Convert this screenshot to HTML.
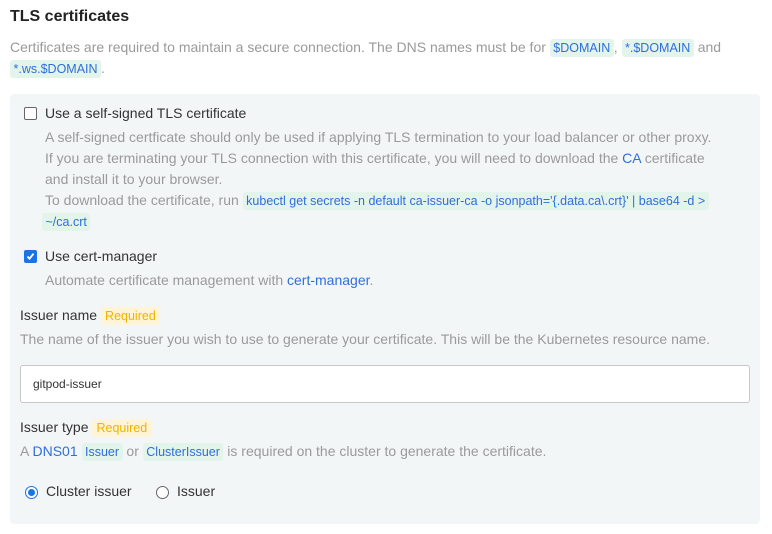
<!DOCTYPE html>
<html><head><meta charset="utf-8"><style>
*{margin:0;padding:0;box-sizing:border-box}
body{width:772px;height:534px;background:#fff;font-family:"Liberation Sans",sans-serif;font-size:14px;color:#333;position:relative;overflow:hidden}
.a{position:absolute;white-space:nowrap;line-height:20px}
.g{color:#9a9a9a}
.b{color:#2f6fdb}
code{font-family:"Liberation Sans",sans-serif;font-size:12.5px;color:#2f6fdb;background:#e3f4ea;border-radius:3px;padding:2px 3.5px}
.req{font-size:12.5px;color:#f0b400;background:#fff4d6;border-radius:3px;padding:2px 4px;margin-left:4px}
.panel{position:absolute;left:10px;top:94px;width:750px;height:430px;background:#f3f6f7;border-radius:4px}
.cb{position:absolute;width:13px;height:13px;border:1px solid #666;border-radius:2px;background:#fff}
.cbon{background:#1a73e8;border-color:#1a73e8}
.rad{position:absolute;width:13px;height:13px;border-radius:50%;border:1px solid #666;background:#fff}
.radon{border:1px solid #1a73e8}
.radon::after{content:"";position:absolute;left:2px;top:2px;width:7px;height:7px;border-radius:50%;background:#1a73e8}
input{position:absolute;left:20px;top:365px;width:730px;height:38px;border:1px solid #c8c8c8;border-radius:3px;background:#fff;font-family:"Liberation Sans",sans-serif;font-size:12px;padding-left:12px;color:#333}
</style></head><body>
<div class="a" style="left:10px;top:7px;font-size:16px;font-weight:bold;color:#222">TLS certificates</div>
<div class="a g" style="left:10px;top:37px">Certificates are required to maintain a secure connection. The DNS names must be for <code>$DOMAIN</code>, <code>*.$DOMAIN</code> and</div>
<div class="a g" style="left:10px;top:58px"><code>*.ws.$DOMAIN</code>.</div>
<div class="panel"></div>
<div class="cb" style="left:24px;top:107px"></div>
<div class="a" style="left:45px;top:103px">Use a self-signed TLS certificate</div>
<div class="a g" style="left:45px;top:127px">A self-signed certficate should only be used if applying TLS termination to your load balancer or other proxy.</div>
<div class="a g" style="left:45px;top:148px">If you are terminating your TLS connection with this certificate, you will need to download the <span class="b">CA</span> certificate</div>
<div class="a g" style="left:45px;top:169px">and install it to your browser.</div>
<div class="a g" style="left:45px;top:190px">To download the certificate, run <code>kubectl get secrets -n default ca-issuer-ca -o jsonpath='{.data.ca\.crt}' | base64 -d &gt;</code></div>
<div class="a g" style="left:45px;top:211px"><code style="margin-left:-3px">~/ca.crt</code></div>
<div class="cb cbon" style="left:24px;top:250px"><svg width="11" height="11" viewBox="0 0 11 11" style="position:absolute;left:0;top:0"><path d="M2.5 5.5l2 2.2 4-5" stroke="#fff" stroke-width="1.8" fill="none"/></svg></div>
<div class="a" style="left:45px;top:246px">Use cert-manager</div>
<div class="a g" style="left:45px;top:270px">Automate certificate management with <span class="b">cert-manager</span>.</div>
<div class="a" style="left:20px;top:305px">Issuer name<span class="req">Required</span></div>
<div class="a g" style="left:20px;top:329px">The name of the issuer you wish to use to generate your certificate. This will be the Kubernetes resource name.</div>
<input value="gitpod-issuer">
<div class="a" style="left:20px;top:417px">Issuer type<span class="req">Required</span></div>
<div class="a g" style="left:20px;top:441px">A <span class="b">DNS01</span> <code>Issuer</code> or <code>ClusterIssuer</code> is required on the cluster to generate the certificate.</div>
<div class="rad radon" style="left:25px;top:486px"></div>
<div class="a" style="left:46px;top:481px">Cluster issuer</div>
<div class="rad" style="left:156px;top:486px"></div>
<div class="a" style="left:177px;top:481px">Issuer</div>
</body></html>
